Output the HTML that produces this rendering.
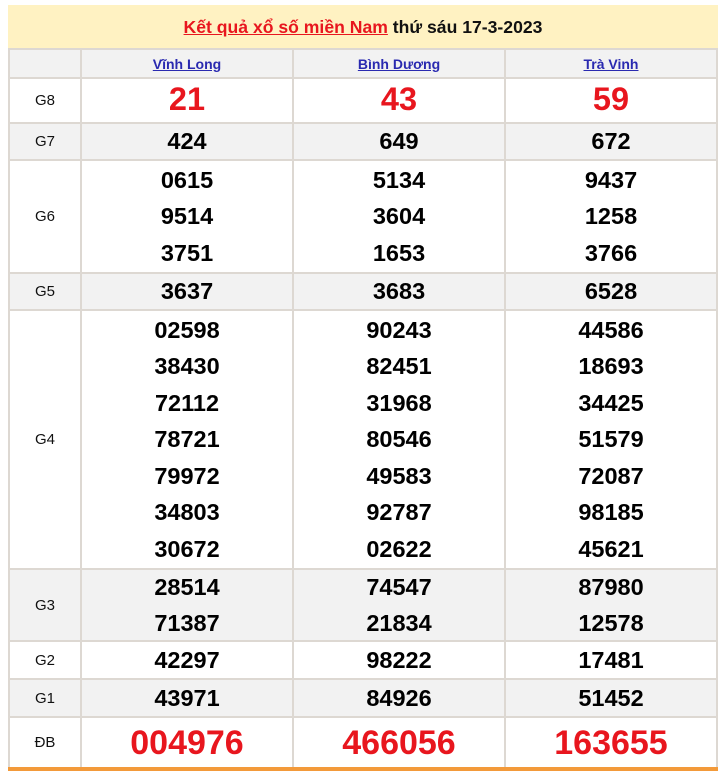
<!DOCTYPE html>
<html><head><meta charset="utf-8"><style>
*{margin:0;padding:0;box-sizing:border-box}
body{width:720px;height:771px;background:#fff;position:relative;overflow:hidden;font-family:"Liberation Sans",Arial,sans-serif}
.t{position:absolute;left:8px;top:5px;width:710px;height:44px;background:#fff2c2;text-align:center;font-size:17.6px;font-weight:bold;line-height:44px;color:#111}
.t a{color:#e8161e;text-decoration:underline}
.r{position:absolute;left:8px;width:710px;border-top:2px solid #ddd8d2}
.g{background:#f2f2f2}
.c{position:absolute;top:0;bottom:0;display:flex;flex-direction:column;justify-content:center;align-items:center;text-align:center}
.c0{left:0;width:72px;font-size:15px;color:#111;border-left:2px solid #ddd8d2}
.c1{left:72px;width:212px;border-left:2px solid #ddd8d2}
.c2{left:284px;width:212px;border-left:2px solid #ddd8d2}
.c3{left:496px;width:214px;border-left:2px solid #ddd8d2;border-right:2px solid #ddd8d2}
.n div{font-size:23.5px;font-weight:bold;line-height:36.5px;color:#000}
.red div{font-size:32.5px;font-weight:bold;color:#e8161e;line-height:40px}
.db div{font-size:34px}
.h a{color:#2a2ab0;font-size:14px;font-weight:bold;text-decoration:underline}
.end{position:absolute;left:8px;top:767px;width:710px;height:4px;background:#f39a3a}
</style></head><body>
<div class="t"><a>Kết quả xổ số miền Nam</a> thứ sáu 17-3-2023</div>

<div class="r g" style="top:48px;height:29px"><div class="c c0"></div><div class="c c1 h"><a>Vĩnh Long</a></div><div class="c c2 h"><a>Bình Dương</a></div><div class="c c3 h"><a>Trà Vinh</a></div></div>

<div class="r" style="top:77px;height:45px"><div class="c c0">G8</div><div class="c c1 red"><div style="margin-top:-3px">21</div></div><div class="c c2 red"><div style="margin-top:-3px">43</div></div><div class="c c3 red"><div style="margin-top:-3px">59</div></div></div>

<div class="r g" style="top:122px;height:37px"><div class="c c0">G7</div><div class="c c1 n"><div>424</div></div><div class="c c2 n"><div>649</div></div><div class="c c3 n"><div>672</div></div></div>

<div class="r" style="top:159px;height:113px"><div class="c c0">G6</div><div class="c c1 n"><div>0615</div><div>9514</div><div>3751</div></div><div class="c c2 n"><div>5134</div><div>3604</div><div>1653</div></div><div class="c c3 n"><div>9437</div><div>1258</div><div>3766</div></div></div>

<div class="r g" style="top:272px;height:37px"><div class="c c0">G5</div><div class="c c1 n"><div>3637</div></div><div class="c c2 n"><div>3683</div></div><div class="c c3 n"><div>6528</div></div></div>

<div class="r" style="top:309px;height:259px"><div class="c c0">G4</div><div class="c c1 n"><div>02598</div><div>38430</div><div>72112</div><div>78721</div><div>79972</div><div>34803</div><div>30672</div></div><div class="c c2 n"><div>90243</div><div>82451</div><div>31968</div><div>80546</div><div>49583</div><div>92787</div><div>02622</div></div><div class="c c3 n"><div>44586</div><div>18693</div><div>34425</div><div>51579</div><div>72087</div><div>98185</div><div>45621</div></div></div>

<div class="r g" style="top:568px;height:72px"><div class="c c0">G3</div><div class="c c1 n"><div>28514</div><div>71387</div></div><div class="c c2 n"><div>74547</div><div>21834</div></div><div class="c c3 n"><div>87980</div><div>12578</div></div></div>

<div class="r" style="top:640px;height:38px"><div class="c c0">G2</div><div class="c c1 n"><div>42297</div></div><div class="c c2 n"><div>98222</div></div><div class="c c3 n"><div>17481</div></div></div>

<div class="r g" style="top:678px;height:38px"><div class="c c0">G1</div><div class="c c1 n"><div>43971</div></div><div class="c c2 n"><div>84926</div></div><div class="c c3 n"><div>51452</div></div></div>

<div class="r" style="top:716px;height:51px"><div class="c c0">ĐB</div><div class="c c1 red db"><div>004976</div></div><div class="c c2 red db"><div>466056</div></div><div class="c c3 red db"><div>163655</div></div></div>

<div class="end"></div>
</body></html>
